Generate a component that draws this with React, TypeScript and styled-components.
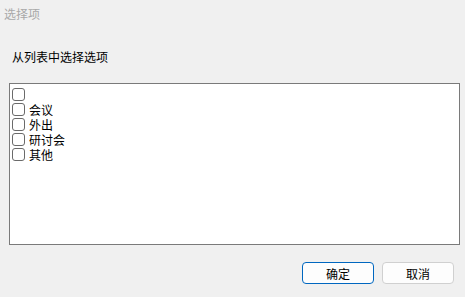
import React, { useState } from 'react';
import styled, { createGlobalStyle } from 'styled-components';

const GlobalStyle = createGlobalStyle`
  html, body {
    margin: 0;
    padding: 0;
    background: #f0f0f0;
  }
  * {
    box-sizing: border-box;
  }
`;

const Window = styled.div`
  width: 465px;
  height: 297px;
  display: flex;
  flex-direction: column;
  background: #f0f0f0;
  font-family: "Noto Sans CJK SC", "Noto Sans", sans-serif;
  font-size: 12px;
  color: #000;
`;

const TitleBar = styled.div`
  height: 28px;
  line-height: 27px;
  padding: 0 4px;
  font-size: 12px;
  color: #a8a8a8;
`;

const Prompt = styled.div`
  margin: 21px 0 0 12px;
  height: 16px;
  line-height: 16px;
`;

const ListBox = styled.div`
  margin: 18px 0 0 9px;
  width: 451px;
  height: 162px;
  border: 1px solid #7a7a7a;
  background: #fff;
  padding: 3px 2px;
  display: flex;
  flex-direction: column;
`;

const Row = styled.label`
  height: 15px;
  display: flex;
  align-items: center;
  gap: 4px;
  overflow: hidden;
  cursor: default;
`;

const Box = styled.span<{ $checked: boolean }>`
  width: 13px;
  height: 13px;
  flex: none;
  border: 1px solid #6a6a6a;
  border-radius: 3px;
  background: ${(p) => (p.$checked ? '#005fb8' : '#fff')};
`;

const ItemText = styled.span`
  display: block;
  height: 15px;
  line-height: 15px;
  overflow: hidden;
`;

const Footer = styled.div`
  margin-top: 17px;
  display: flex;
  justify-content: flex-end;
  gap: 8px;
  padding-right: 11px;
`;

const Button = styled.button<{ $primary?: boolean }>`
  width: 72px;
  height: 22px;
  padding: 0;
  font-family: inherit;
  font-size: 12px;
  color: #000;
  background: #fdfdfd;
  border: ${(p) => (p.$primary ? '1.5px solid #0067c0' : '1px solid #d0d0d0')};
  border-radius: 4px;
  cursor: pointer;
`;

const items = ['', '会议', '外出', '研讨会', '其他'];

const App: React.FC = () => {
  const [checked, setChecked] = useState<boolean[]>(items.map(() => false));

  const toggle = (i: number) => {
    setChecked((c) => c.map((v, j) => (j === i ? !v : v)));
  };

  return (
    <Window>
      <GlobalStyle />
      <TitleBar>选择项</TitleBar>
      <Prompt>从列表中选择选项</Prompt>
      <ListBox>
        {items.map((item, i) => (
          <Row key={i} onClick={() => toggle(i)}>
            <Box $checked={checked[i]} />
            <ItemText>{item}</ItemText>
          </Row>
        ))}
      </ListBox>
      <Footer>
        <Button $primary>确定</Button>
        <Button>取消</Button>
      </Footer>
    </Window>
  );
};

export default App;
